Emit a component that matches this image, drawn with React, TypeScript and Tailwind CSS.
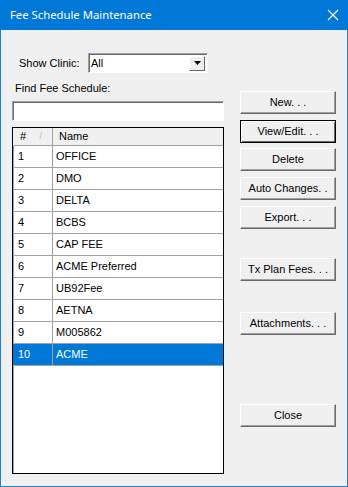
import React from 'react';

const rows = [
    { id: 1, name: 'OFFICE' },
    { id: 2, name: 'DMO' },
    { id: 3, name: 'DELTA' },
    { id: 4, name: 'BCBS' },
    { id: 5, name: 'CAP FEE' },
    { id: 6, name: 'ACME Preferred' },
    { id: 7, name: 'UB92Fee' },
    { id: 8, name: 'AETNA' },
    { id: 9, name: 'M005862' },
    { id: 10, name: 'ACME' },
];

const WinButton: React.FC<{ label: string; isDefault?: boolean; className?: string }> = ({ label, isDefault, className }) => (
    <button
        type="button"
        className={`h-[23px] w-[96px] text-[11px] text-black bg-[#f0f0f0] flex items-center justify-center ${isDefault
            ? 'border border-black shadow-[inset_1px_1px_0_#fff,inset_-1px_-1px_0_#696969]'
            : 'border border-t-white border-l-white border-r-[#696969] border-b-[#696969] shadow-[inset_-1px_-1px_0_#a0a0a0]'
            } ${className ?? ''}`}
    >
        {label}
    </button>
);

export default function App() {
    return (
        <div className="w-[348px] h-[487px] flex flex-col bg-[#f0f0f0] border-x border-b border-[#1883d7]" style={{ fontFamily: '"Liberation Sans", Arial, sans-serif' }}>
            {/* Title bar */}
            <div className="h-[30px] -mx-px bg-[#0078d7] flex items-center justify-between pl-[10px] pr-[9px] shrink-0">
                <span className="text-white text-[11.3px]" style={{ fontFamily: '"Noto Sans", sans-serif' }}>Fee Schedule Maintenance</span>
                <svg width="12" height="12" viewBox="0 0 12 12">
                    <path d="M1 1 L11 11 M11 1 L1 11" stroke="white" strokeWidth="1.1" />
                </svg>
            </div>

            <div className="flex flex-1">
                {/* Left column */}
                <div className="ml-[11px] w-[212px] flex flex-col">
                    <div className="flex items-center mt-[23px] h-[20px]">
                        <span className="text-[11px] text-black ml-[7px] w-[69px]">Show Clinic:</span>
                        <div className="w-[120px] h-[20px] bg-white border border-t-[#a0a0a0] border-l-[#a0a0a0] border-r-white border-b-white shadow-[inset_1px_1px_0_#696969] flex items-center justify-between pl-[2px] pr-[2px]">
                            <span className="text-[11px] text-black">All</span>
                            <div className="w-[16px] h-[15px] bg-[#f0f0f0] border border-t-white border-l-white border-r-[#696969] border-b-[#696969] flex items-center justify-center">
                                <svg width="7" height="4" viewBox="0 0 7 4"><path d="M0 0 H7 L3.5 4 Z" fill="black" /></svg>
                            </div>
                        </div>
                    </div>
                    <span className="text-[11px] text-black ml-[3px] mt-[8px] leading-[14px]">Find Fee Schedule:</span>
                    <div className="mt-[6px] h-[20px] bg-white border border-t-[#a0a0a0] border-l-[#a0a0a0] border-r-white border-b-white shadow-[inset_1px_1px_0_#696969]" />

                    {/* Grid */}
                    <div className="mt-[6px] h-[347px] bg-white border border-black flex flex-col shadow-[inset_1px_1px_0_#a0a0a0]">
                        <div className="h-[18px] flex bg-[#f0f0f0] border-b border-[#a0a0a0] text-[11px] text-black">
                            <div className="w-[40px] flex items-center pl-[7px] justify-between pr-[10px] border-r border-[#a0a0a0]">
                                <span>#</span>
                                <span className="text-[9px] text-[#b0b0b0]">/</span>
                            </div>
                            <div className="flex items-center pl-[6px]">Name</div>
                        </div>
                        {rows.map((r) => {
                            const sel = r.id === 10;
                            return (
                                <div key={r.id} className={`h-[22px] flex text-[11px] border-b border-[#a0a0a0] ${sel ? 'bg-[#0078d7] text-white' : 'text-black'}`}>
                                    <div className="w-[40px] flex items-center pl-[5px] border-r border-[#a0a0a0]">{r.id}</div>
                                    <div className="flex items-center pl-[3px]">{r.name}</div>
                                </div>
                            );
                        })}
                    </div>
                </div>

                {/* Right column */}
                <div className="ml-[16px] flex flex-col">
                    <WinButton label="New. . ." className="mt-[61px]" />
                    <WinButton label="View/Edit. . ." isDefault className="mt-[6px]" />
                    <WinButton label="Delete" className="mt-[5px]" />
                    <WinButton label="Auto Changes. ." className="mt-[6px]" />
                    <WinButton label="Export. . ." className="mt-[6px]" />
                    <WinButton label="Tx Plan Fees. . ." className="mt-[29px]" />
                    <WinButton label="Attachments. . ." className="mt-[31px]" />
                    <WinButton label="Close" className="mt-[69px]" />
                </div>
            </div>
        </div>
    );
}
